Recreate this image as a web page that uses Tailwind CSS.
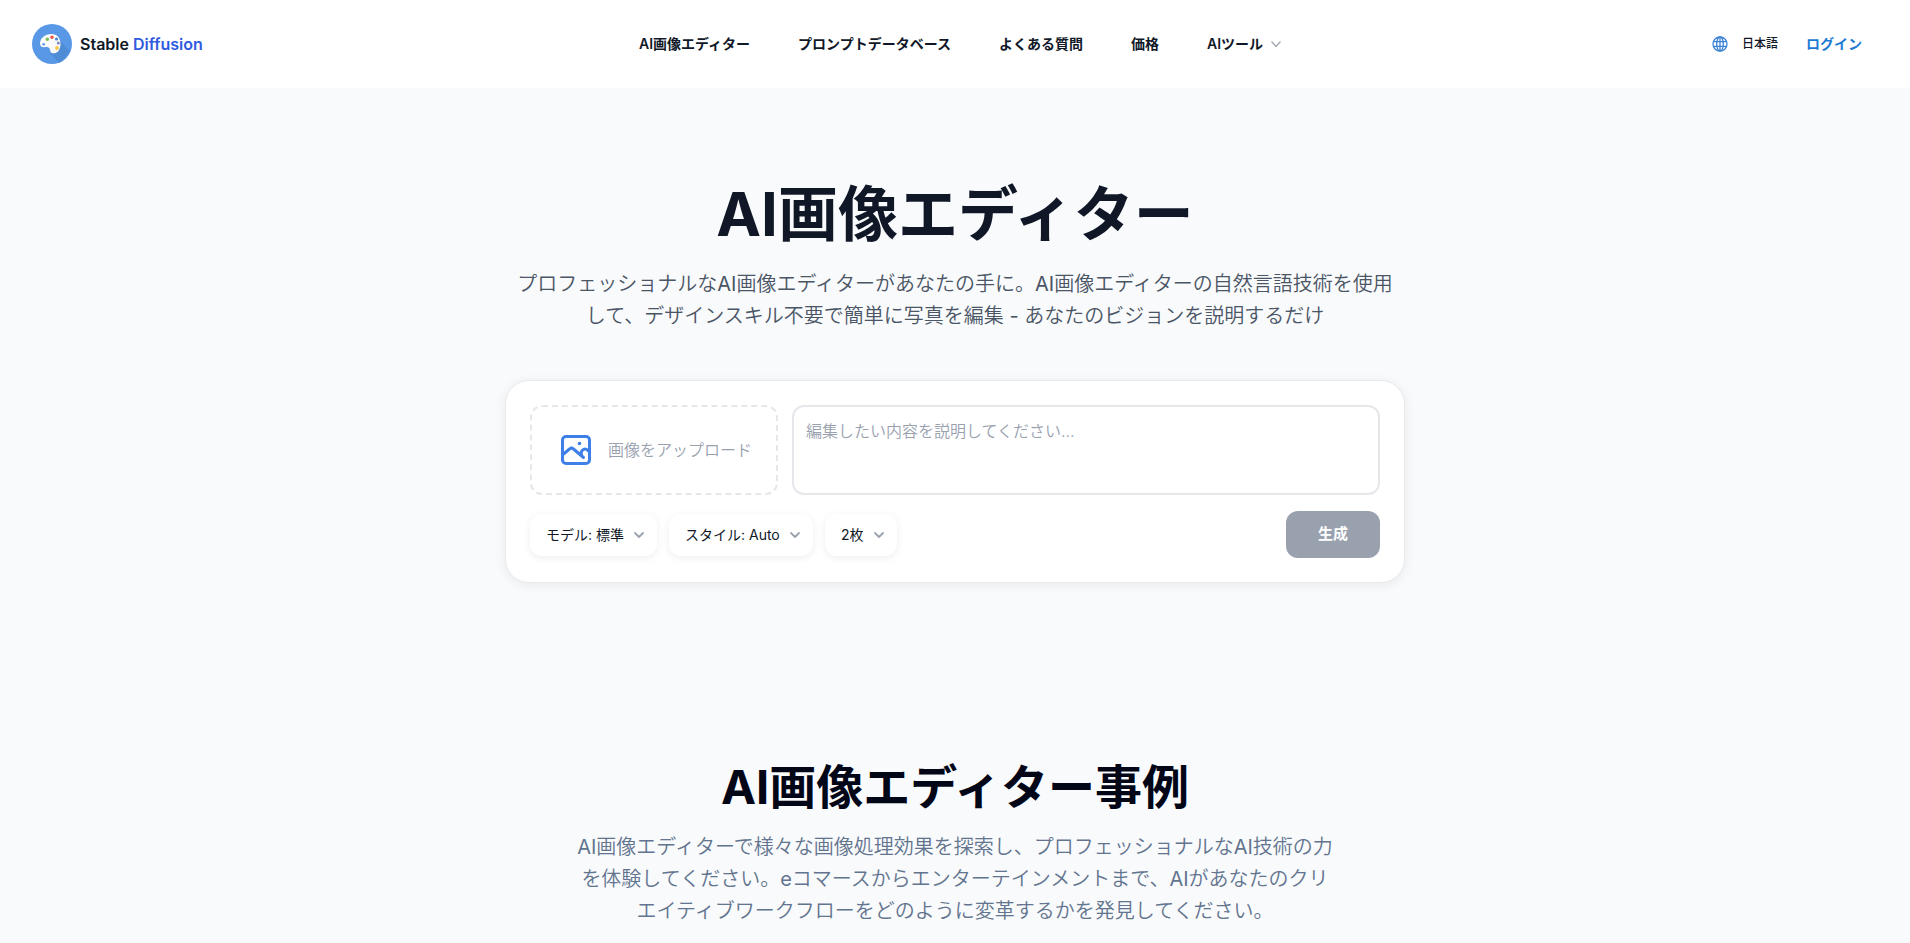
<!DOCTYPE html>
<html lang="ja">
<head>
<meta charset="utf-8">
<meta name="viewport" content="width=device-width, initial-scale=1">
<title>AI画像エディター</title>
<script src="https://cdn.jsdelivr.net/npm/@tailwindcss/browser@4"></script>
</head>
<body class="bg-[#f9fafc] font-[Inter,'Noto_Sans_CJK_JP',sans-serif] text-gray-900">
<header class="flex h-[88px] items-center justify-between bg-white px-8">
  <a href="#" class="flex flex-1 items-center gap-2 font-semibold">
    <svg class="size-10" viewBox="0 0 40 40" aria-hidden="true">
      <defs><clipPath id="disc"><circle cx="20" cy="20" r="20"/></clipPath></defs>
      <circle cx="20" cy="20" r="20" fill="#5898e6"/>
      <path clip-path="url(#disc)" d="M27 16 38 27 28 40 18 29l6-3z" fill="#4f8cd6"/>
      <path d="M19.500 10C12.500 10 8 14.500 8 19.500c0 2.800 2 4 4.500 3.800 1.900-.2 3.700-.6 4.700.6 1.400 1.700.3 5.600 5 5.400 4.300-.2 6.300-5 6.300-9.300C28.500 14 25 10 19.500 10z" fill="#fafafa"/>
      <circle cx="11.700" cy="20.200" r="1.300" fill="#5b9be8"/>
      <circle cx="15.300" cy="15.300" r="1.700" fill="#7dbb55"/>
      <circle cx="20" cy="13.200" r="1.700" fill="#ef5345"/>
      <circle cx="24.500" cy="15" r="1.600" fill="#4285d8"/>
      <circle cx="26.300" cy="19" r="1.500" fill="#7e86c8"/>
      <circle cx="25" cy="24" r="1.900" fill="#fbc847"/>
    </svg>
    <span>Stable <span class="text-[#2f5bdf]">Diffusion</span></span>
  </a>
  <nav class="flex items-center gap-12 pl-7 text-sm font-semibold">
    <a href="#">AI画像エディター</a>
    <a href="#">プロンプトデータベース</a>
    <a href="#">よくある質問</a>
    <a href="#">価格</a>
    <button type="button" class="flex items-center gap-1.5">AIツール
      <svg class="size-3.5" viewBox="0 0 14 14" fill="none" stroke="#a3a8b0" stroke-width="1.300" aria-hidden="true"><path d="M2.500 4.500 7 9.500l4.500-5"/></svg>
    </button>
  </nav>
  <div class="flex flex-1 items-center justify-end gap-7 pr-4">
    <button type="button" class="flex items-center gap-3.5 text-xs font-medium">
      <svg class="size-4" viewBox="0 0 16 16" fill="none" stroke="#3b82d6" stroke-width="1.300" aria-hidden="true"><circle cx="8" cy="8" r="7"/><ellipse cx="8" cy="8" rx="3.300" ry="7"/><path d="M1.500 5.700h13M1.500 10.300h13M8 1v14"/></svg>
      日本語
    </button>
    <a href="#" class="text-sm font-semibold text-[#1d7ad3]">ログイン</a>
  </div>
</header>
<main class="px-4">
  <section class="flex flex-col items-center pt-24 pb-45">
    <h1 class="mb-6 text-6xl leading-none font-bold">AI画像エディター</h1>
    <p class="mb-12 max-w-[888px] text-center font-[Inter,'Noto_Sans_CJK_JP_DemiLight','Noto_Sans_CJK_JP',sans-serif] text-xl leading-8 text-gray-600">プロフェッショナルなAI画像エディターがあなたの手に。AI画像エディターの自然言語技術を使用して、デザインスキル不要で簡単に写真を編集 - あなたのビジョンを説明するだけ</p>
    <form class="w-full max-w-[900px] rounded-3xl border border-[#e9eaec] bg-white p-6 shadow-[0_2px_12px_rgba(0,0,0,0.07)]">
      <div class="flex gap-3.5">
        <button type="button" class="flex h-[90px] w-[248px] shrink-0 items-center justify-center gap-4 rounded-xl border-2 border-dashed border-gray-200 pl-1 font-[350] text-gray-400">
          <svg class="size-8" viewBox="0 0 32 32" fill="none" stroke="#3f80e8" stroke-width="3" stroke-linecap="round" stroke-linejoin="round" aria-hidden="true"><rect x="2.500" y="2.500" width="27" height="27" rx="3.500"/><path d="M3 20.500 9.500 15a3 3 0 0 1 4 0L23.500 23.500M21.500 20.500a4 4 0 0 1 5-5.200l2.500 2"/><circle cx="19.500" cy="9.500" r="1.800" fill="#3f80e8" stroke="none"/></svg>
          画像をアップロード
        </button>
        <textarea aria-label="編集内容" placeholder="編集したい内容を説明してください..." class="h-[90px] min-w-0 flex-1 resize-none rounded-xl border-2 border-gray-200 px-3 py-3 leading-6 font-[350] outline-none placeholder:text-gray-400"></textarea>
      </div>
      <div class="mt-4 flex items-center justify-between">
        <div class="flex gap-3 text-sm">
          <label class="relative flex items-center">
            <select aria-label="モデル" class="h-[42px] appearance-none rounded-xl bg-white pr-[33px] pl-4 shadow-[0_2px_8px_rgba(0,0,0,0.07)]"><option>モデル: 標準</option></select>
            <svg class="pointer-events-none absolute right-3 size-3" viewBox="0 0 12 12" fill="none" stroke="#9ca3af" stroke-width="1.800" stroke-linecap="round" stroke-linejoin="round" aria-hidden="true"><path d="m2 4 4 4 4-4"/></svg>
          </label>
          <label class="relative flex items-center">
            <select aria-label="スタイル" class="h-[42px] appearance-none rounded-xl bg-white pr-[33px] pl-4 shadow-[0_2px_8px_rgba(0,0,0,0.07)]"><option>スタイル: Auto</option></select>
            <svg class="pointer-events-none absolute right-3 size-3" viewBox="0 0 12 12" fill="none" stroke="#9ca3af" stroke-width="1.800" stroke-linecap="round" stroke-linejoin="round" aria-hidden="true"><path d="m2 4 4 4 4-4"/></svg>
          </label>
          <label class="relative flex items-center">
            <select aria-label="枚数" class="h-[42px] appearance-none rounded-xl bg-white pr-[33px] pl-4 shadow-[0_2px_8px_rgba(0,0,0,0.07)]"><option>2枚</option></select>
            <svg class="pointer-events-none absolute right-3 size-3" viewBox="0 0 12 12" fill="none" stroke="#9ca3af" stroke-width="1.800" stroke-linecap="round" stroke-linejoin="round" aria-hidden="true"><path d="m2 4 4 4 4-4"/></svg>
          </label>
        </div>
        <button type="submit" class="h-[47px] rounded-xl bg-gray-400 px-8 text-[15px] font-bold text-white">生成</button>
      </div>
    </form>
  </section>
  <section class="flex flex-col items-center">
    <h2 class="mb-5 text-[47px] leading-[48px] font-bold text-[#020617]">AI画像エディター事例</h2>
    <p class="max-w-[764px] text-center font-[Inter,'Noto_Sans_CJK_JP_DemiLight','Noto_Sans_CJK_JP',sans-serif] text-xl leading-8 text-slate-500">AI画像エディターで様々な画像処理効果を探索し、プロフェッショナルなAI技術の力を体験してください。eコマースからエンターテインメントまで、AIがあなたのクリエイティブワークフローをどのように変革するかを発見してください。</p>
  </section>
</main>
</body>
</html>
